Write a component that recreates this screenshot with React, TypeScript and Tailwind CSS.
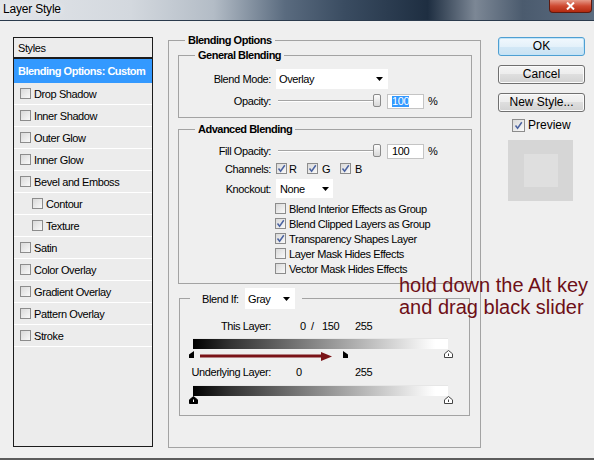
import React from "react";

function Check({ checked = false, size = "sm" }: { checked?: boolean; size?: "sm" | "md" }) {
  return (
    <span
      className={`relative inline-flex shrink-0 items-center justify-center border border-[#8c8c8c] bg-[linear-gradient(135deg,#d9d9d9,#f9f9f9)] ${
        size === "md" ? "h-[13px] w-[13px]" : "h-[11px] w-[11px]"
      }`}
    >
      {checked && (
        <svg width="9" height="9" viewBox="0 0 9 9" className="absolute">
          <path d="M1.5 4.5 L3.6 7.2 L7.8 1.2" fill="none" stroke="#4a62a0" strokeWidth="1.5" />
        </svg>
      )}
    </span>
  );
}

function Arrow() {
  return (
    <svg width="7" height="4" viewBox="0 0 7 4">
      <path d="M0 0H7L3.5 4Z" fill="#000" />
    </svg>
  );
}

function Slider() {
  return (
    <div className="relative h-[14px] w-[111px]">
      <div className="absolute left-[2px] top-[6px] h-[2px] w-[96px] border-t border-b border-t-[#a5a5a5] border-b-white" />
      <div className="absolute left-[97px] top-0 h-[13px] w-[8px] rounded-[2px] border border-[#8a8a8a] bg-[linear-gradient(#fdfdfd,#d8d8d8)]" />
    </div>
  );
}

function NumInput({ selected = false }: { selected?: boolean }) {
  return (
    <div className="flex h-[15px] w-[37px] items-center border border-[#c4c4c4] bg-white pl-[4px]">
      <span className={selected ? "bg-[#3399ff] leading-[11px] text-white" : "leading-[11px]"}>100</span>
    </div>
  );
}

function Button({ children, primary = false, className = "" }: { children: React.ReactNode; primary?: boolean; className?: string }) {
  return (
    <div
      className={`flex h-[19px] items-center justify-center rounded-[3px] border ${
        primary
          ? "border-[#4f9fd2] bg-[linear-gradient(#f1f8fd_0%,#e4f1fa_50%,#d3e8f6_51%,#c9e2f3_100%)] shadow-[inset_0_0_0_1px_#c2e4f8]"
          : "border-[#707070] bg-[linear-gradient(#f4f4f4_0%,#ececec_49%,#dedede_50%,#d2d2d2_100%)] shadow-[inset_0_0_0_1px_#fbfbfb]"
      } ${className}`}
    >
      {children}
    </div>
  );
}

const items: [string, boolean][] = [
  ["Drop Shadow", false],
  ["Inner Shadow", false],
  ["Outer Glow", false],
  ["Inner Glow", false],
  ["Bevel and Emboss", false],
  ["Contour", true],
  ["Texture", true],
  ["Satin", false],
  ["Color Overlay", false],
  ["Gradient Overlay", false],
  ["Pattern Overlay", false],
  ["Stroke", false],
];

const advChecks: [string, boolean][] = [
  ["Blend Interior Effects as Group", false],
  ["Blend Clipped Layers as Group", true],
  ["Transparency Shapes Layer", true],
  ["Layer Mask Hides Effects", false],
  ["Vector Mask Hides Effects", false],
];

function Marker({ kind }: { kind: "white" | "black" | "left" | "right" }) {
  if (kind === "left")
    return (
      <svg width="5" height="7" viewBox="0 0 5 7">
        <path d="M5 0V7H0V3.5Z" fill="#000" />
      </svg>
    );
  if (kind === "right")
    return (
      <svg width="5" height="7" viewBox="0 0 5 7">
        <path d="M0 0L5 3.5V7H0Z" fill="#000" />
      </svg>
    );
  const black = kind === "black";
  return (
    <svg width="9" height="8" viewBox="0 0 9 8">
      <path d="M4.5 0.5L8.5 3.8V7.5H0.5V3.8Z" fill={black ? "#000" : "#fff"} stroke={black ? "#000" : "#444"} strokeWidth="1" />
      <path d="M4.5 3.5V6" stroke={black ? "#fff" : "#444"} strokeWidth="1" />
    </svg>
  );
}

export default function App() {
  return (
    <div className="relative h-[460px] w-[594px] overflow-hidden bg-[#efefef] font-['Liberation_Sans',Arial,sans-serif] text-[11px] leading-[14px] tracking-[-0.4px] text-black">
      {/* Title bar */}
      <div className="flex h-[21px] items-start justify-between border-b border-[#2a3a4c] bg-[linear-gradient(90deg,#e2e5e9_0%,#d3d8de_22%,#b3bcc6_36%,#5a6b7f_48%,#3a4c61_58%,#1e2e41_72%,#7c8795_80%,#4b5b6e_88%,#5b6c80_100%)]">
        <span className="ml-[3px] mt-[1px] text-[12px] leading-[16px] tracking-[-0.2px] [text-shadow:0_0_6px_#ffffff]">Layer Style</span>
        <div className="mr-[2px] flex h-[13px] w-[43px] items-center justify-center rounded-b-[4px] border border-t-0 border-[#5e1a10] bg-[linear-gradient(#e59a88,#cf4a32_50%,#b3290f)]">
          <svg width="9" height="8" viewBox="0 0 9 8">
            <path d="M1 0.5L8 7.5M8 0.5L1 7.5" stroke="#fff" strokeWidth="2" />
          </svg>
        </div>
      </div>

      {/* Body */}
      <div className="flex h-[439px] border-b-2 border-[#5c5c5c] pl-[13px]">
        {/* Styles list */}
        <div className="mt-[16px] h-[410px] w-[140px] shrink-0 border border-[#1c1c1c] bg-[#ececec]">
          <div className="flex h-[21px] items-center border-b-2 border-[#1c1c1c] pl-[4px]">Styles</div>
          <div className="flex h-[24px] items-center bg-[#3399ff] pl-[4px] font-bold tracking-[-0.5px] text-white">Blending Options: Custom</div>
          {items.map(([name, indent]) => (
            <div key={name} className={`flex h-[22px] items-center border-b border-white ${indent ? "pl-[18px]" : "pl-[6px]"}`}>
              <Check />
              <span className="ml-[3px]">{name}</span>
            </div>
          ))}
        </div>

        {/* Main group */}
        <fieldset className="ml-[15px] mt-[12px] h-[415px] w-[313px] shrink-0 border border-[#a3a3a3]">
          <legend className="ml-[16px] px-[3px] font-bold leading-[14px] tracking-[-0.5px]">Blending Options</legend>
          <div className="flex flex-col">
            {/* General Blending */}
            <fieldset className="ml-[9px] mt-[1px] h-[70px] w-[294px] border border-[#a3a3a3]">
              <legend className="ml-[16px] px-[3px] font-bold leading-[14px] tracking-[-0.5px]">General Blending</legend>
              <div className="flex flex-col">
                <div className="mt-[7px] flex h-[20px] items-center">
                  <div className="w-[92px] text-right">Blend Mode:</div>
                  <div className="ml-[5px] flex h-[20px] w-[112px] items-center justify-between bg-white pl-[3px] pr-[5px]">
                    <span>Overlay</span>
                    <Arrow />
                  </div>
                </div>
                <div className="mt-[5px] flex h-[14px] items-center">
                  <div className="w-[92px] text-right">Opacity:</div>
                  <div className="ml-[5px]">
                    <Slider />
                  </div>
                  <NumInput selected />
                  <span className="ml-[4px]">%</span>
                </div>
              </div>
            </fieldset>

            {/* Advanced Blending */}
            <fieldset className="ml-[9px] mt-[4px] h-[162px] w-[294px] border border-[#a3a3a3]">
              <legend className="ml-[16px] px-[3px] font-bold leading-[14px] tracking-[-0.5px]">Advanced Blending</legend>
              <div className="flex flex-col">
                <div className="mt-[8px] flex h-[14px] items-center">
                  <div className="w-[92px] text-right">Fill Opacity:</div>
                  <div className="ml-[5px]">
                    <Slider />
                  </div>
                  <NumInput />
                  <span className="ml-[4px]">%</span>
                </div>
                <div className="mt-[4px] flex h-[13px] items-center">
                  <div className="w-[92px] text-right">Channels:</div>
                  <div className="ml-[5px] flex w-[31px] items-center">
                    <Check checked />
                    <span className="ml-[2px]">R</span>
                  </div>
                  <div className="flex w-[33px] items-center">
                    <Check checked />
                    <span className="ml-[4px]">G</span>
                  </div>
                  <div className="flex items-center">
                    <Check checked />
                    <span className="ml-[4px]">B</span>
                  </div>
                </div>
                <div className="mt-[4px] flex h-[19px] items-center">
                  <div className="w-[92px] text-right">Knockout:</div>
                  <div className="ml-[5px] flex h-[19px] w-[57px] items-center justify-between bg-white pl-[4px] pr-[4px]">
                    <span>None</span>
                    <Arrow />
                  </div>
                </div>
                <div className="mt-[3px] flex flex-col pl-[96px]">
                  {advChecks.map(([label, on]) => (
                    <div key={label} className="flex h-[15px] items-center">
                      <Check checked={on} />
                      <span className="ml-[3px]">{label}</span>
                    </div>
                  ))}
                </div>
              </div>
            </fieldset>

            {/* Blend If */}
            <fieldset className="ml-[10px] mt-[4px] h-[128px] w-[291px] border border-[#a3a3a3]">
              <legend className="ml-[10px] pl-[12px] pr-[7px]">
                <div className="flex h-[21px] items-center">
                  <span className="w-[43px]">Blend If:</span>
                  <div className="flex h-[21px] w-[50px] items-center justify-between bg-white pl-[3px] pr-[5px]">
                    <span>Gray</span>
                    <Arrow />
                  </div>
                </div>
              </legend>
              <div className="flex flex-col">
                <div className="mt-[10px] flex h-[14px] items-center">
                  <div className="w-[91px] text-right">This Layer:</div>
                  <div className="w-[29px]" />
                  <div className="w-[11px]">0</div>
                  <div className="w-[11px]">/</div>
                  <div className="w-[33px]">150</div>
                  <div>255</div>
                </div>
                <div className="ml-[13px] mt-[5px] h-[11px] w-[255px] bg-[linear-gradient(90deg,#000_0%,#333_15%,#fff_95%)] shadow-[inset_0_1px_0_#e6e6e6]" />
                <div className="relative ml-[13px] h-[9px] w-[255px]">
                  <div className="absolute left-[-4px] top-[2px] flex">
                    <Marker kind="left" />
                  </div>
                  <div className="absolute left-[150px] top-[2px] flex">
                    <Marker kind="right" />
                  </div>
                  <div className="absolute left-[251px] top-[1px] flex">
                    <Marker kind="white" />
                  </div>
                  <svg className="absolute left-[7px] top-[3px]" width="132" height="10" viewBox="0 0 132 10">
                    <path d="M0 4H122" stroke="#7a1418" strokeWidth="3" />
                    <path d="M121 0L132 4.5L121 9Z" fill="#7a1418" />
                  </svg>
                </div>
                <div className="mt-[7px] flex h-[14px] items-center">
                  <div className="w-[91px] text-right">Underlying Layer:</div>
                  <div className="w-[25px]" />
                  <div className="w-[59px]">0</div>
                  <div>255</div>
                </div>
                <div className="ml-[13px] mt-[6px] h-[11px] w-[255px] bg-[linear-gradient(90deg,#000_0%,#333_15%,#fff_95%)] shadow-[inset_0_1px_0_#e6e6e6]" />
                <div className="relative ml-[13px] h-[9px] w-[255px]">
                  <div className="absolute left-[-4px] top-[0px] flex">
                    <Marker kind="black" />
                  </div>
                  <div className="absolute left-[251px] top-[0px] flex">
                    <Marker kind="white" />
                  </div>
                </div>
              </div>
            </fieldset>
          </div>
        </fieldset>

        {/* Right column */}
        <div className="ml-[17px] mt-[16px] flex w-[87px] shrink-0 flex-col text-[12px] leading-[15px] tracking-normal">
          <Button primary>OK</Button>
          <Button className="mt-[9px]">Cancel</Button>
          <Button className="mt-[9px]">New Style...</Button>
          <div className="mt-[7px] flex h-[13px] items-center pl-[14px]">
            <Check checked size="md" />
            <span className="ml-[3px]">Preview</span>
          </div>
          <div className="ml-[10px] mt-[8px] flex h-[61px] w-[65px] items-center justify-center bg-[#d6d6d6]">
            <div className="h-[33px] w-[34px] bg-[#dfdfdf]" />
          </div>
        </div>
      </div>

      {/* Annotation overlay */}
      <div className="absolute left-[399px] top-[274px] text-[20px] leading-[22px] tracking-normal text-[#6e0f17]">
        hold down the Alt key
        <br />
        and drag black slider
      </div>
    </div>
  );
}
